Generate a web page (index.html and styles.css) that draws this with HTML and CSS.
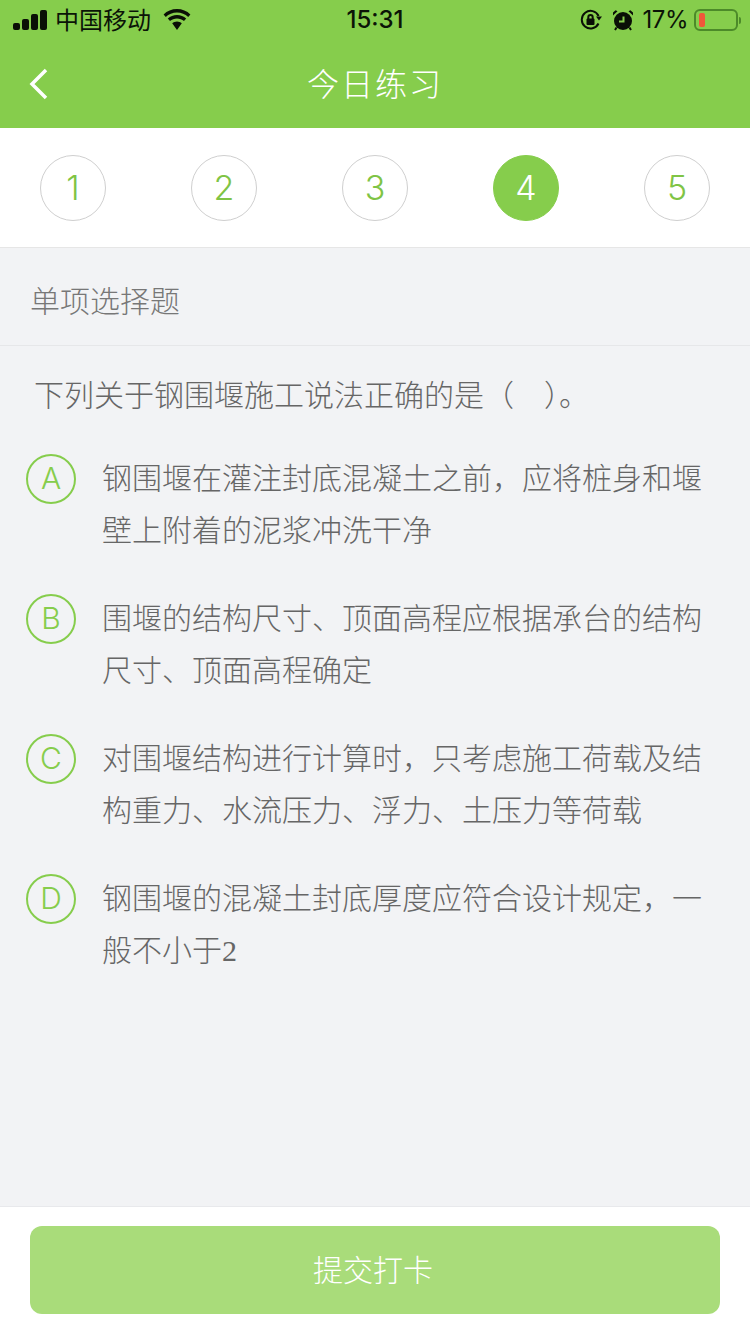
FILE: index.html
```html
<!DOCTYPE html>
<html lang="zh-CN">
<head>
<meta charset="utf-8">
<title>今日练习</title>
<link rel="stylesheet" href="styles.css">
</head>
<body>
<div class="page">
  <header class="header">
    <div class="status">
      <div class="status-left">
        <svg class="signal" width="34" height="20" viewBox="0 0 34 20"><rect x="0" y="13" width="7" height="7" rx="2"/><rect x="9" y="9" width="7" height="11" rx="2"/><rect x="18" y="4" width="7" height="16" rx="2"/><rect x="27" y="0" width="7" height="20" rx="2"/></svg>
        <span class="carrier">中国移动</span>
        <svg class="wifi" width="30" height="22" viewBox="0 0 30 22"><path d="M15 3.400c4.300 0 8.300 1.700 11.200 4.500l2.200-2.500C24.900 2 20.200 0 15 0S5.100 2 1.600 5.400l2.200 2.500C6.700 5.100 10.700 3.400 15 3.400z"/><path d="M15 9.400c2.700 0 5.100 1 7 2.700l2.200-2.500C21.800 7.400 18.500 6 15 6s-6.800 1.400-9.200 3.600L8 12.100c1.900-1.700 4.300-2.700 7-2.700z"/><path d="M15 12.400c-1.800 0-3.500.7-4.800 1.800L15 21l4.800-6.800c-1.300-1.100-3-1.800-4.800-1.800z"/></svg>
      </div>
      <div class="time">15:31</div>
      <div class="status-right">
        <svg class="lock" width="22" height="22" viewBox="0 0 22 22"><path class="lock-ring" d="M18.500 14.500A8.800 8.800 0 1 1 18.600 7"/><path d="M16 7.500h6l-3 4z"/><rect x="6.500" y="9.500" width="8" height="6.500" rx="1"/><path class="lock-ring" d="M8.300 10V8.300a2.200 2.200 0 0 1 4.400 0V10"/></svg>
        <svg class="alarm" width="22" height="22" viewBox="0 0 22 22"><circle cx="11" cy="12" r="9"/><path d="M1 6.500 5.500 2.200 3.600 1.300 1 3.500zM21 6.500 16.500 2.200 18.400 1.300 21 3.500z"/><path d="M4.500 18.500 3 21M17.500 18.500 19 21" class="alarm-leg"/><path class="alarm-hand" d="M11.500 7.500v5H7"/></svg>
        <span class="percent">17%</span>
        <span class="battery"><span class="battery-level"></span></span>
        <span class="battery-cap"></span>
      </div>
    </div>
    <div class="nav">
      <svg class="back" width="20" height="32" viewBox="0 0 20 32"><path d="M17 2 3 16l14 14"/></svg>
      <h1 class="title">今日练习</h1>
    </div>
  </header>

  <nav class="steps">
    <span class="step">1</span>
    <span class="step">2</span>
    <span class="step">3</span>
    <span class="step step-active">4</span>
    <span class="step">5</span>
  </nav>

  <main class="content">
    <div class="type">单项选择题</div>
    <p class="question">下列关于钢围堰施工说法正确的是（<span class="gap"></span>）。</p>
    <ul class="options">
      <li class="option"><span class="letter">A</span><span class="text">钢围堰在灌注封底混凝土之前，应将桩身和堰壁上附着的泥浆冲洗干净</span></li>
      <li class="option"><span class="letter">B</span><span class="text">围堰的结构尺寸、顶面高程应根据承台的结构尺寸、顶面高程确定</span></li>
      <li class="option"><span class="letter">C</span><span class="text">对围堰结构进行计算时，只考虑施工荷载及结构重力、水流压力、浮力、土压力等荷载</span></li>
      <li class="option"><span class="letter">D</span><span class="text">钢围堰的混凝土封底厚度应符合设计规定，一般不小于<span class="serif">2</span></span></li>
    </ul>
  </main>

  <footer class="footer">
    <button class="submit" type="button">提交打卡</button>
  </footer>
</div>
</body>
</html>
```
FILE: styles.css
```css
* { box-sizing: border-box; }
html, body { margin: 0; padding: 0; }
body {
  font-family: "Noto Sans CJK SC", "Liberation Sans", sans-serif;
  background: #f2f3f5;
}
.page {
  width: 750px;
  height: 1334px;
  display: flex;
  flex-direction: column;
  overflow: hidden;
}
.header { height: 128px; background: #86cd4c; flex: none; }
.status {
  height: 40px;
  padding: 0 9px 0 13px;
  display: flex;
  align-items: center;
  justify-content: space-between;
  position: relative;
  color: #0b1407;
}
.status-left, .status-right { display: flex; align-items: center; }
.signal, .wifi, .lock, .alarm { fill: #0a0f06; flex: none; }
.carrier { font-size: 24px; line-height: 40px; margin-left: 8px; position: relative; top: -1px; }
.wifi { margin-left: 11px; }
.time {
  position: absolute;
  left: 0; right: 0;
  text-align: center;
  font: 500 24px/40px "Inter", "Liberation Sans", sans-serif;
}
.lock-ring { fill: none; stroke: #0a0f06; stroke-width: 2; }
.alarm { margin-left: 10px; }
.alarm-leg { fill: none; stroke: #0a0f06; stroke-width: 2; }
.alarm-hand { fill: none; stroke: #86cd4c; stroke-width: 2; }
.percent { font: 400 24px/40px "Inter", "Liberation Sans", sans-serif; margin-left: 9px; letter-spacing: -.5px; }
.battery {
  width: 44px;
  height: 22px;
  margin-left: 6px;
  border: 2px solid #4c8a29;
  border-radius: 6px;
  padding: 2px 3px;
  display: flex;
}
.battery-level { width: 6px; background: #f0563a; border-radius: 2px; }
.battery-cap { width: 2px; height: 7px; background: #4c8a29; margin-left: 1px; border-radius: 0 2px 2px 0; }
.nav {
  height: 88px;
  position: relative;
  display: flex;
  align-items: center;
  justify-content: center;
}
.back {
  position: absolute;
  left: 29px;
  top: 28px;
  fill: none;
  stroke: #fff;
  stroke-width: 3.500;
}
.title {
  margin: 0;
  font-size: 32px;
  font-weight: 300;
  color: #fff;
  letter-spacing: 2px;
  line-height: 88px;
  position: relative;
  top: -2px;
}
.steps {
  height: 120px;
  flex: none;
  background: #fff;
  border-bottom: 1px solid #e6e6e6;
  padding: 0 40px;
  display: flex;
  align-items: center;
  justify-content: space-between;
}
.step {
  width: 66px;
  height: 66px;
  border: 1px solid #cfcfcf;
  border-radius: 50%;
  color: #7fc445;
  font: 300 34px/64px "Inter", "Liberation Sans", sans-serif;
  text-align: center;
}
.step-active { background: #86cd4c; border-color: #86cd4c; color: #fff; }
.content { flex: 1; min-height: 0; }
.type {
  height: 98px;
  padding-left: 30px;
  border-bottom: 1px solid #e6e7e9;
  font-size: 30px;
  font-weight: 300;
  line-height: 102px;
  color: #777;
}
.question {
  margin: 0;
  padding: 22px 0 0 34px;
  font-size: 30px;
  font-weight: 300;
  line-height: 50px;
  color: #666;
}
.gap { display: inline-block; width: 30px; }
.options { list-style: none; margin: 0; padding: 36px 26px 0; }
.option { display: flex; height: 140px; }
.letter {
  width: 50px;
  height: 50px;
  flex: none;
  border: 2px solid #86cd4c;
  border-radius: 50%;
  color: #86cd4c;
  font: 300 30px/44px "Inter", "Liberation Sans", sans-serif;
  text-align: center;
}
.text {
  width: 600px;
  margin-left: 26px;
  margin-top: -4px;
  font-size: 30px;
  font-weight: 300;
  line-height: 52px;
  color: #666;
}
.serif { font-family: "Liberation Serif", serif; font-weight: 400; }
.footer {
  height: 128px;
  flex: none;
  background: #fff;
  border-top: 1px solid #e8e9ec;
  padding: 19px 30px 0;
}
.submit {
  display: block;
  width: 690px;
  height: 88px;
  border: 0;
  padding: 0 4px 4px 0;
  border-radius: 12px;
  background: #a9dc7a;
  color: #fff;
  font-family: inherit;
  font-size: 30px;
  font-weight: 300;
}
```
